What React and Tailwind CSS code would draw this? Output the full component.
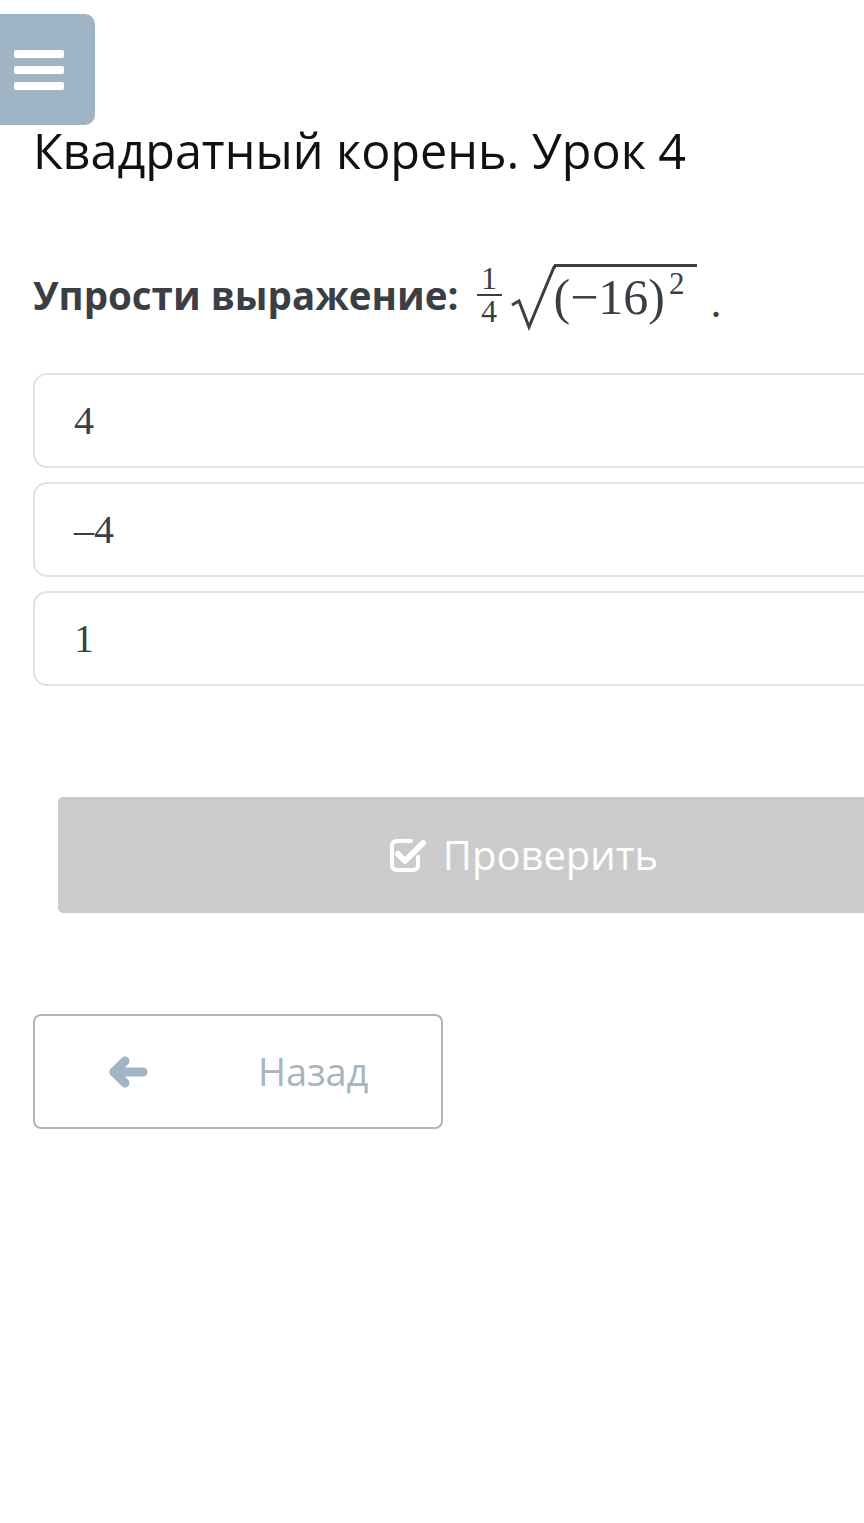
import React from 'react';

const sans = { fontFamily: '"Open Sans", "Noto Sans", sans-serif' };

const options = ['4', '–4', '1'];

const CheckSquare = () => (
  <svg className="h-[36px] w-[40px]" viewBox="0 0 40 36" fill="none" stroke="white" strokeLinecap="round" strokeLinejoin="round">
    <path d="M23 4 H9 Q4 4 4 9 V28 Q4 33 9 33 H25 Q30 33 30 28 V20" strokeWidth="4" />
    <path d="M10 17 L17 24 L35 6" strokeWidth="6" />
  </svg>
);

const ArrowLeft = () => (
  <svg className="h-[32px] w-[40px]" viewBox="0 0 40 32" fill="none" stroke="#9fb4c4" strokeLinecap="round" strokeLinejoin="round" strokeWidth="9">
    <path d="M6 16 H35" />
    <path d="M17 5 L6 16 L17 27" />
  </svg>
);

// 1/4 * sqrt((-16)^2)
const Formula = () => (
  <span className="inline-flex items-center font-['Liberation_Serif',serif] text-[#3a3f45]">
    <span className="ml-[18px] inline-flex flex-col items-center text-[32px] leading-[31px]">
      <span>1</span>
      <span className="h-[2px] w-[25px] bg-[#3a3f45]" />
      <span>4</span>
    </span>
    <svg className="ml-[8px] mt-[6px] h-[66px] w-[46px]" viewBox="0 0 46 66" fill="none">
      <path d="M2 40 L9 36 L19 62 L44 2 L46 2" stroke="#3a3f45" strokeWidth="3" strokeLinejoin="miter" />
    </svg>
    <span className="-ml-[2px] inline-flex items-start border-t-[3px] border-[#3a3f45] pr-[12px] text-[50px] leading-[60px]">
      <span>(−16)</span>
      <span className="ml-[4px] text-[31px] leading-[34px]">2</span>
    </span>
    <span className="ml-[14px] mt-[16px] text-[44px] leading-[44px]">.</span>
  </span>
);

export default function App() {
  return (
    <div className="relative min-h-[1523px] w-[864px] overflow-hidden bg-white" style={sans}>
      <button className="absolute left-0 top-[14px] flex h-[111px] w-[95px] flex-col justify-center gap-[8px] rounded-r-[10px] bg-[#9fb4c4] pl-[14px]">
        <span className="h-[8px] w-[50px] rounded-[2px] bg-white" />
        <span className="h-[8px] w-[50px] rounded-[2px] bg-white" />
        <span className="h-[8px] w-[50px] rounded-[2px] bg-white" />
      </button>

      <div className="w-[1046px] px-[33px] pt-[121px]">
        <h1 className="text-[48.5px] leading-[58px] font-normal text-[#111]">Квадратный корень. Урок 4</h1>

        <div className="mt-[80px] flex items-center">
          <span className="text-[38.5px] font-bold leading-[60px] text-[#3a3f45]">Упрости выражение:</span>
          <Formula />
        </div>

        <div className="mt-[42px] flex flex-col gap-[14px]">
          {options.map((o) => (
            <div
              key={o}
              className="flex h-[95px] items-center rounded-[14px] border-2 border-[#e2e2e2] px-[39px] font-['Liberation_Serif',serif] text-[40px] text-[#3a3f45]"
            >
              {o}
            </div>
          ))}
        </div>

        <div className="mt-[111px] px-[25px]">
          <button className="flex h-[116px] w-full items-center justify-center gap-[15px] rounded-[5px] bg-[#cbcbcb] text-[40px] text-white">
            <CheckSquare />
            <span>Проверить</span>
          </button>
        </div>

        <button className="mt-[101px] flex h-[115px] w-[410px] items-center rounded-[8px] border-2 border-[#aab7c1] pl-[73px] text-[38px] text-[#a6b5c0]">
          <ArrowLeft />
          <span className="ml-[110px]">Назад</span>
        </button>
      </div>
    </div>
  );
}
